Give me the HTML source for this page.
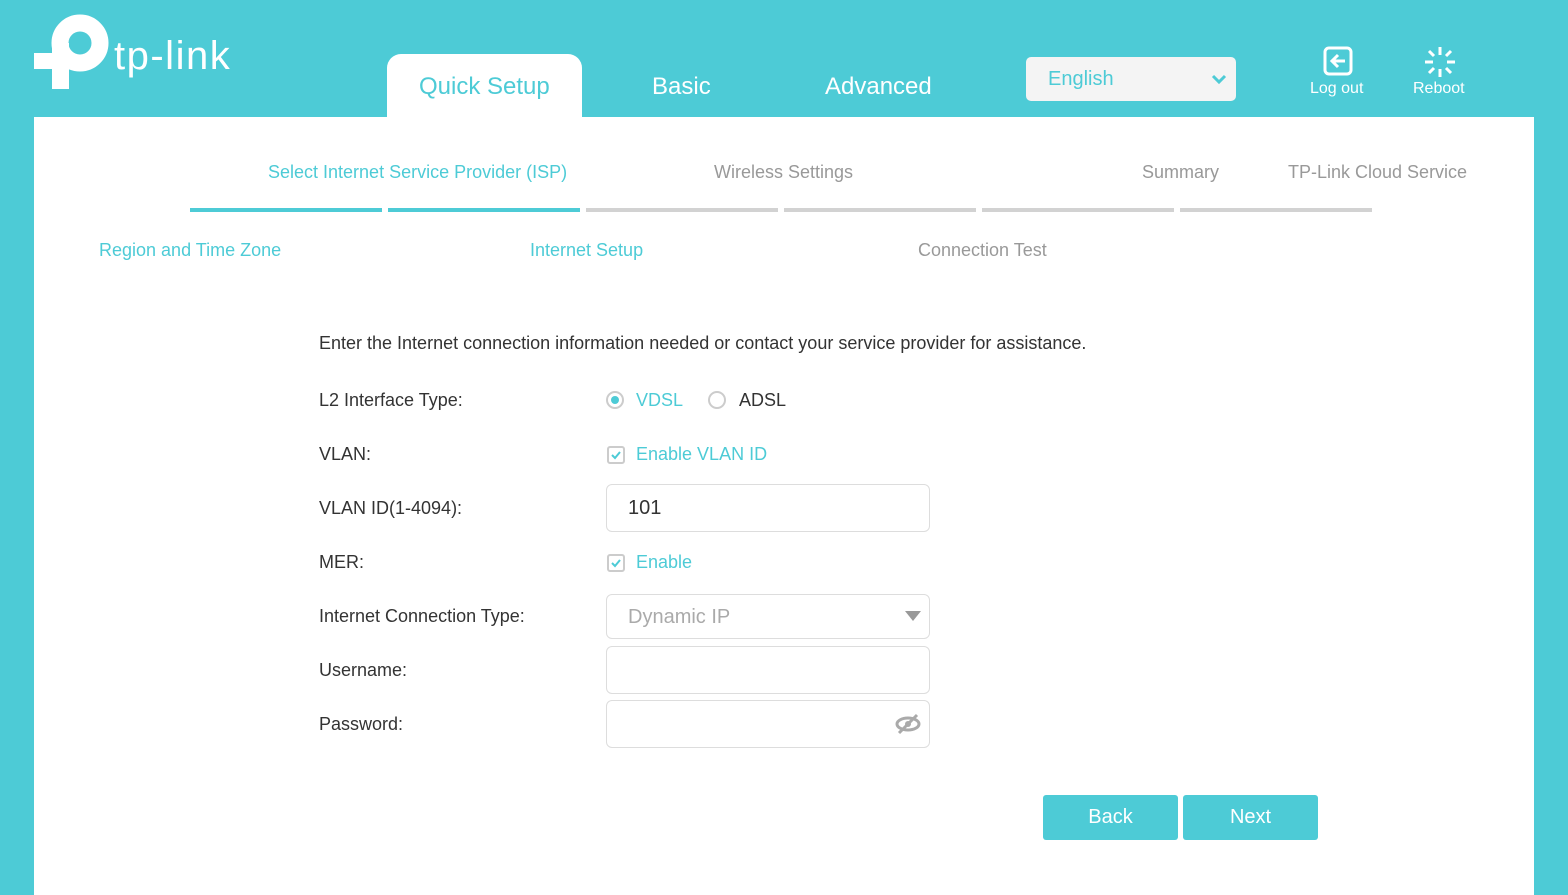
<!DOCTYPE html>
<html><head><style>
*{margin:0;padding:0;box-sizing:border-box}
body{width:1568px;height:895px;background:#4dcbd6;font-family:"Liberation Sans",sans-serif;position:relative;overflow:hidden}
.a{position:absolute;white-space:nowrap}
.main{position:absolute;left:34px;top:117px;width:1500px;height:778px;background:#fff}
.tab{font-size:24px;color:#fff}
.seg{position:absolute;top:208px;height:4px;width:192px;background:#d2d2d2}
.lbl{font-size:18px;color:#999}
.f{font-size:18px;color:#333}
.t{color:#4dcbd6}
.in{position:absolute;left:606px;width:324px;border:1px solid #ddd;border-radius:6px;background:#fff}
.cb{position:absolute;left:607px;width:18px;height:18px;border:2px solid #ccc;border-radius:3px}
.btn{position:absolute;top:795px;height:45px;background:#4dcbd6;color:#fff;font-size:20px;text-align:center;line-height:45px;border-radius:3px}
</style></head><body>
<svg class="a" style="left:0;top:0" width="120" height="95">
<circle cx="80" cy="43" r="20" fill="none" stroke="#fff" stroke-width="17"/>
<rect x="52" y="43" width="17" height="46" fill="#fff"/>
<rect x="34" y="53" width="35" height="16" fill="#fff"/>
</svg>
<div class="a" style="left:114px;top:34px;font-size:40px;color:#fff;letter-spacing:1.5px">tp-link</div>
<div class="a" style="left:387px;top:54px;width:195px;height:70px;background:#fff;border-radius:14px 14px 0 0"></div>
<div class="a tab" style="left:419px;top:73px;color:#4dcbd6">Quick Setup</div>
<div class="a tab" style="left:652px;top:73px">Basic</div>
<div class="a tab" style="left:825px;top:73px">Advanced</div>
<div class="a" style="left:1026px;top:57px;width:210px;height:44px;background:#f4f4f4;border-radius:5px"></div>
<div class="a" style="left:1048px;top:68px;font-size:20px;color:#4dcbd6">English</div>
<svg class="a" style="left:1210px;top:73px" width="18" height="12"><path d="M3 3 L9 9 L15 3" stroke="#4dcbd6" stroke-width="3" fill="none"/></svg>
<svg class="a" style="left:1323px;top:46px" width="30" height="30" viewBox="0 0 30 30"><rect x="2" y="2" width="26" height="26" rx="4" fill="none" stroke="#fff" stroke-width="3"/><path d="M15 9 L9 15 L15 21 M11 15 H20 M17 15 H22" stroke="#fff" stroke-width="3" fill="none"/></svg>
<div class="a" style="left:1310px;top:80px;font-size:16px;color:#fff">Log out</div>
<svg class="a" style="left:1424px;top:46px" width="32" height="32" viewBox="0 0 32 32" stroke="#fff" stroke-width="3"><path d="M16 1V9M16 23V31M1 16H9M23 16H31M5 5L10 10M22 22L27 27M27 5L22 10M10 22L5 27"/></svg>
<div class="a" style="left:1413px;top:80px;font-size:16px;color:#fff">Reboot</div>
<div class="main"></div>
<div class="a lbl t" style="left:268px;top:162px">Select Internet Service Provider (ISP)</div>
<div class="a lbl" style="left:714px;top:162px">Wireless Settings</div>
<div class="a lbl" style="left:1142px;top:162px">Summary</div>
<div class="a lbl" style="left:1288px;top:162px">TP-Link Cloud Service</div>
<div class="seg" style="left:190px;background:#4dcbd6"></div>
<div class="seg" style="left:388px;background:#4dcbd6"></div>
<div class="seg" style="left:586px"></div>
<div class="seg" style="left:784px"></div>
<div class="seg" style="left:982px"></div>
<div class="seg" style="left:1180px"></div>
<div class="a lbl t" style="left:99px;top:240px">Region and Time Zone</div>
<div class="a lbl t" style="left:530px;top:240px">Internet Setup</div>
<div class="a lbl" style="left:918px;top:240px">Connection Test</div>
<div class="a f" style="left:319px;top:333px">Enter the Internet connection information needed or contact your service provider for assistance.</div>
<div class="a f" style="left:319px;top:390px">L2 Interface Type:</div>
<div class="a f" style="left:319px;top:444px">VLAN:</div>
<div class="a f" style="left:319px;top:498px">VLAN ID(1-4094):</div>
<div class="a f" style="left:319px;top:552px">MER:</div>
<div class="a f" style="left:319px;top:606px">Internet Connection Type:</div>
<div class="a f" style="left:319px;top:660px">Username:</div>
<div class="a f" style="left:319px;top:714px">Password:</div>
<div class="a" style="left:606px;top:391px;width:18px;height:18px;border:2px solid #ccc;border-radius:50%"><div style="margin:3px;width:8px;height:8px;border-radius:50%;background:#4dcbd6"></div></div>
<div class="a f t" style="left:636px;top:390px">VDSL</div>
<div class="a" style="left:708px;top:391px;width:18px;height:18px;border:2px solid #ccc;border-radius:50%"></div>
<div class="a f" style="left:739px;top:390px">ADSL</div>
<div class="cb" style="top:446px"><svg width="14" height="14" style="position:absolute;left:0;top:0"><path d="M3 7 L6 10 L11 4" stroke="#4dcbd6" stroke-width="2" fill="none"/></svg></div>
<div class="a f t" style="left:636px;top:444px">Enable VLAN ID</div>
<div class="in" style="top:484px;height:48px"></div>
<div class="a" style="left:628px;top:497px;font-size:20px;color:#333">101</div>
<div class="cb" style="top:554px"><svg width="14" height="14" style="position:absolute;left:0;top:0"><path d="M3 7 L6 10 L11 4" stroke="#4dcbd6" stroke-width="2" fill="none"/></svg></div>
<div class="a f t" style="left:636px;top:552px">Enable</div>
<div class="in" style="top:594px;height:45px"></div>
<div class="a" style="left:628px;top:606px;font-size:20px;color:#aaa">Dynamic IP</div>
<svg class="a" style="left:904px;top:610px" width="18" height="12"><path d="M1 1H17L9 11Z" fill="#999"/></svg>
<div class="in" style="top:646px;height:48px"></div>
<div class="in" style="top:700px;height:48px"></div>
<svg class="a" style="left:895px;top:713px" width="26" height="22" viewBox="0 0 26 22"><ellipse cx="13" cy="11" rx="11" ry="6" fill="none" stroke="#aaa" stroke-width="3"/><circle cx="13" cy="11" r="3" fill="#aaa"/><path d="M4 20 L22 2" stroke="#aaa" stroke-width="3"/></svg>
<div class="btn" style="left:1043px;width:135px">Back</div>
<div class="btn" style="left:1183px;width:135px">Next</div>
</body></html>
